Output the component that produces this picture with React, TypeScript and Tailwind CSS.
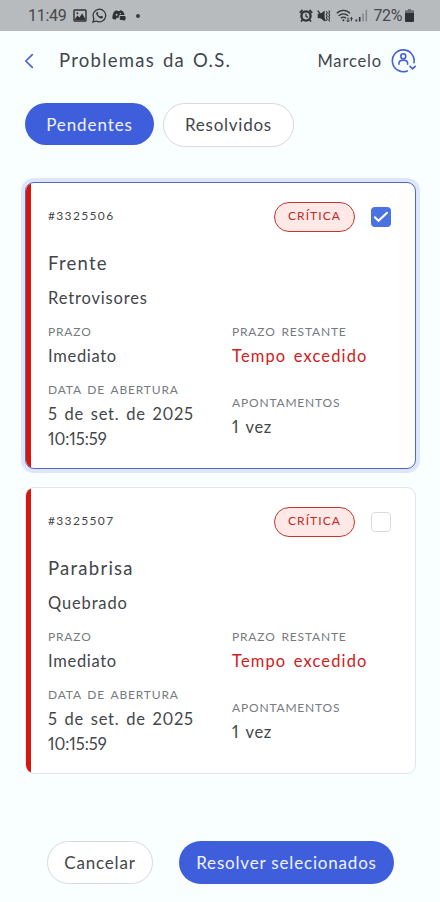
import React, { useState } from 'react';
import clsx from 'clsx';

interface Problem {
  id: string;
  severity: string;
  title: string;
  subtitle: string;
  deadline: string;
  remaining: string;
  openedDate: string;
  openedTime: string;
  notes: string;
}

const PROBLEMS: Problem[] = [
  {
    id: '3325506',
    severity: 'Crítica',
    title: 'Frente',
    subtitle: 'Retrovisores',
    deadline: 'Imediato',
    remaining: 'Tempo excedido',
    openedDate: '5 de set. de 2025',
    openedTime: '10:15:59',
    notes: '1 vez',
  },
  {
    id: '3325507',
    severity: 'Crítica',
    title: 'Parabrisa',
    subtitle: 'Quebrado',
    deadline: 'Imediato',
    remaining: 'Tempo excedido',
    openedDate: '5 de set. de 2025',
    openedTime: '10:15:59',
    notes: '1 vez',
  },
];

export default function App() {
  const [selected, setSelected] = useState<string[]>(['3325506']);

  const toggle = (id: string) => {
    setSelected((prev) =>
      prev.includes(id) ? prev.filter((item) => item !== id) : [...prev, id]
    );
  };

  return (
    <div className="flex h-[902px] w-full flex-col overflow-hidden bg-[#f9feff] font-[Lato,sans-serif] text-[#43464b]">
      <StatusBar />

      <header className="flex h-[60px] items-center pr-6 pl-6">
        <button type="button" aria-label="Voltar" className="w-[35px]">
          <svg width="10" height="16" viewBox="0 0 10 16" fill="none" stroke="#4a63cf" strokeWidth="1.7" strokeLinecap="round" strokeLinejoin="round">
            <path d="M8.3 1.6 1.8 8l6.5 6.4" />
          </svg>
        </button>
        <h1 className="-mt-[3px] text-[18.5px] leading-6 tracking-[1.25px] whitespace-nowrap [word-spacing:2px]">
          Problemas da O.S.
        </h1>
        <div className="ml-auto flex items-center gap-[9px]">
          <span className="text-[16.5px] leading-6 tracking-[0.85px]">Marcelo</span>
          <UserIcon />
        </div>
      </header>

      <div className="flex items-start gap-[9px] pt-3 pl-[25px]">
        <button
          type="button"
          className="h-[42px] w-[129px] rounded-full bg-[#3f5edb] pt-px text-[17px] tracking-[0.9px] text-[#eef2ff]"
        >
          Pendentes
        </button>
        <button
          type="button"
          className="h-11 w-[131px] rounded-full border border-[#d8dade] bg-white text-[17px] tracking-[0.75px]"
        >
          Resolvidos
        </button>
      </div>

      <main className="mt-[35px] flex flex-col gap-[18px] pr-6 pl-[25px]">
        {PROBLEMS.map((problem) => (
          <ProblemCard
            key={problem.id}
            problem={problem}
            checked={selected.includes(problem.id)}
            onToggle={() => toggle(problem.id)}
          />
        ))}
      </main>

      <footer className="mt-[67px] flex gap-[26px] pl-[47px]">
        <button
          type="button"
          className="h-[43px] w-[106px] rounded-full border border-[#d8d9df] bg-white text-[17px] tracking-[0.8px]"
        >
          Cancelar
        </button>
        <button
          type="button"
          className="h-[43px] w-[215px] rounded-full bg-[#3f5edb] text-[17px] tracking-[0.82px] whitespace-nowrap text-[#eef2ff]"
        >
          Resolver selecionados
        </button>
      </footer>
    </div>
  );
}

function ProblemCard({
  problem,
  checked,
  onToggle,
}: {
  problem: Problem;
  checked: boolean;
  onToggle: () => void;
}) {
  return (
    <article
      className={clsx(
        'flex h-[287px] overflow-hidden rounded-[9px] border bg-white',
        checked
          ? 'border-[#5269bf] shadow-[0_0_0_4px_#dfe5fb]'
          : 'border-[#e2e5ee]'
      )}
    >
      <div className="w-[5px] shrink-0 bg-[#d5160f]" />
      <div className="flex-1 pt-[19px] pr-6 pl-[17px]">
        <div className="flex h-[30px] items-center">
          <span className="-mt-0.5 text-xs tracking-[1.35px]">#{problem.id}</span>
          <span className="ml-auto flex h-[30px] w-[81px] items-center justify-center rounded-full border border-[#c5352f] bg-[#ffe9e7] pb-0.5 text-xs tracking-[1.1px] text-[#c02a25] uppercase">
            {problem.severity}
          </span>
          <Checkbox checked={checked} onToggle={onToggle} />
        </div>

        <h2 className="mt-[19px] text-[18.5px] leading-6 tracking-[1.25px]">{problem.title}</h2>
        <p className="mt-[11px] text-[16.5px] leading-6 tracking-[0.85px]">{problem.subtitle}</p>

        <div className="mt-[14px] grid grid-cols-[184px_1fr] items-center gap-y-[13px]">
          <Field label="Prazo">{problem.deadline}</Field>
          <Field label="Prazo restante">
            <span className="tracking-[1.15px] text-[#cf211b]">{problem.remaining}</span>
          </Field>
          <Field label="Data de abertura">
            {problem.openedDate}
            <br />
            <span className="tracking-[-0.05px]">{problem.openedTime}</span>
          </Field>
          <Field label="Apontamentos">
            <span className="tracking-[0.6px]">{problem.notes}</span>
          </Field>
        </div>
      </div>
    </article>
  );
}

function Field({ label, children }: { label: string; children: React.ReactNode }) {
  return (
    <div className="whitespace-nowrap">
      <p className="text-xs leading-4 tracking-[0.82px] text-[#777b80] uppercase [word-spacing:2px]">{label}</p>
      <p className="mt-1 text-[16.5px] leading-[25px] tracking-[0.7px] proportional-nums [word-spacing:2px]">
        {children}
      </p>
    </div>
  );
}

function Checkbox({ checked, onToggle }: { checked: boolean; onToggle: () => void }) {
  return (
    <button
      type="button"
      role="checkbox"
      aria-checked={checked}
      onClick={onToggle}
      className={clsx(
        'ml-4 flex size-5 items-center justify-center rounded-[4px]',
        checked ? 'bg-[#4a72e2]' : 'border border-[#d9dbe0] bg-white'
      )}
    >
      {checked && (
        <svg width="16" height="12" viewBox="0 0 16 12" fill="none" stroke="#fff" strokeWidth="2.1">
          <path d="m1.3 5.7 4.2 4.1L14.6 1.3" />
        </svg>
      )}
    </button>
  );
}

function UserIcon() {
  return (
    <svg width="25" height="26" viewBox="0 0 25 26" fill="none" stroke="#4564d3" strokeWidth="1.6" strokeLinecap="round" strokeLinejoin="round">
      <path d="M16.2 22.9A10.9 10.9 0 1 1 23 14.6" />
      <circle cx="12.3" cy="8.3" r="2.5" />
      <path d="M8 16.3v-1.2c0-1.9 1.8-3 4.3-3s4.3 1.1 4.3 3v1.2" />
      <path d="m19 18.4 2.6 2.4 2.6-2.4" />
    </svg>
  );
}

function StatusBar() {
  return (
    <div className="flex h-[31px] items-center bg-[#b8bbbe] pr-[26px] pl-7 font-[Roboto,sans-serif] text-[16px] text-[#46484b]">
      <span className="w-[45px] tracking-[-0.3px]">11:49</span>
      <div className="flex items-center text-[#303236]">
        <svg width="14" height="13" viewBox="0 0 14 13" fill="none" stroke="currentColor" strokeWidth="1.4">
          <rect x="1" y="1" width="12" height="11" rx="0.8" />
          <path d="m2 10 2.4-3.4 2 1.8 2.8-3.8L12 9.4V11H2Z" fill="currentColor" stroke="none" />
          <circle cx="4.4" cy="4.2" r="1" fill="currentColor" stroke="none" />
        </svg>
        <svg className="ml-[5px]" width="15" height="15" viewBox="0 0 15 15" fill="none" stroke="currentColor" strokeWidth="1.2">
          <path d="m.9 14.1 1-3.5A6.3 6.3 0 1 1 4.3 13Z" />
          <path d="M4.8 4.2c-.8.7-.8 1.8.2 3.2 1.1 1.5 2.4 2.6 3.8 3 1.1.3 1.8-.1 2.1-.9.2-.6.1-.8-.3-1l-1.3-.6c-.4-.2-.5 0-1 .7-1.1-.4-2-1.2-2.6-2.3.6-.6.7-.7.5-1.2l-.5-1c-.2-.3-.6-.2-.9.1Z" fill="currentColor" stroke="none" />
        </svg>
        <svg className="ml-[5px]" width="14" height="13" viewBox="0 0 14 13" fill="currentColor">
          <path d="M.4 9.6C.2 6.6.9 4.2 2.3 2.4 3.3 1.7 4.2 1.4 5 1.3l.5.8h2.3l.5-.8c1 .1 2 .5 2.8 1.1.8 1.1 1.3 2.2 1.5 3.6H8.4c-1 0-1.6.7-1.6 1.6V8.7H4.6L4 10.3C2.8 10.7 1.3 10.4.4 9.6Z" />
          <circle cx="4.6" cy="5.8" r="1" className="text-[#b8bbbe]" />
          <circle cx="8.4" cy="4.6" r="0.7" className="text-[#b8bbbe]" />
          <path d="M7.8 7h4.9c.5 0 .9.4.9.9V10c0 .5-.4.9-.9.9h-.3v1.4L11 10.9H8.7c-.5 0-.9-.4-.9-.9Z" />
        </svg>
        <span className="ml-[10px] size-1 rounded-full bg-[#3a3c3f]" />
      </div>

      <div className="ml-auto flex items-center text-[#303236]">
        <svg width="14" height="13" viewBox="0 0 14 13" fill="none" stroke="currentColor">
          <circle cx="7" cy="7" r="4.6" strokeWidth="2.3" />
          <path d="M7 4.7V7.4l1.9 1" strokeWidth="1.2" />
          <path d="M.8 3.8 3.6 1M13.2 3.8 10.4 1M3.3 11 2 12.5M10.7 11l1.3 1.5" strokeWidth="1.8" />
        </svg>
        <svg className="ml-1" width="14" height="14" viewBox="0 0 15 14" fill="none" stroke="currentColor">
          <path d="M.8 4.6h3L8.2 1v12L3.8 9.4h-3Z" fill="currentColor" stroke="none" />
          <path d="m.8 1.2 8.4 11" strokeWidth="1.5" />
          <path d="m10 2 1 1.6L10 5.3 11 7l-1 1.7 1 1.7-1 1.6M12.6 1l1 1.7-1 1.7 1 1.7-1 1.7 1 1.7-1 1.7 1 1.6" strokeWidth="1.1" />
        </svg>
        <svg className="ml-[5px]" width="18" height="14" viewBox="0 0 18 14" fill="none" stroke="currentColor" strokeWidth="1.3">
          <path d="M.8 4.4c3.6-4 9.6-4 13.2 0M2.6 6.9c2.7-2.8 6.9-2.8 9.6 0M4.9 9.2c1.4-1.4 3.6-1.4 5 0" />
          <circle cx="7.4" cy="11.3" r="1" fill="currentColor" stroke="none" />
          <path d="M12 8.6v4.2m-1.3-1.4 1.3 1.4 1.3-1.4M15.4 12.2V8.4m-1.3 1.4 1.3-1.4 1.3 1.4" strokeWidth="1" />
        </svg>
        <svg className="ml-px" width="13" height="13" viewBox="0 0 13 13" fill="currentColor">
          <path d="M.5 10.5h1.8v2H.5zM3.9 8h1.6v4.5H3.9z" />
          <path d="M7.3 4.5h1.5v8H7.3zM10.6.8h1.5v11.7h-1.5z" className="text-[#85888c]" />
        </svg>
        <span className="ml-[5px] text-[16px] tracking-[-0.4px] text-[#46484b]">72%</span>
        <svg className="ml-[3px]" width="9" height="13" viewBox="0 0 9 13" fill="currentColor">
          <path d="M3 0h3v1.3h2.2c.5 0 .8.3.8.8V4H0V2.1c0-.5.3-.8.8-.8H3Z" className="text-[#696c70]" />
          <path d="M0 4h9v8.1c0 .5-.4.9-.9.9H.9c-.5 0-.9-.4-.9-.9Z" />
        </svg>
      </div>
    </div>
  );
}
